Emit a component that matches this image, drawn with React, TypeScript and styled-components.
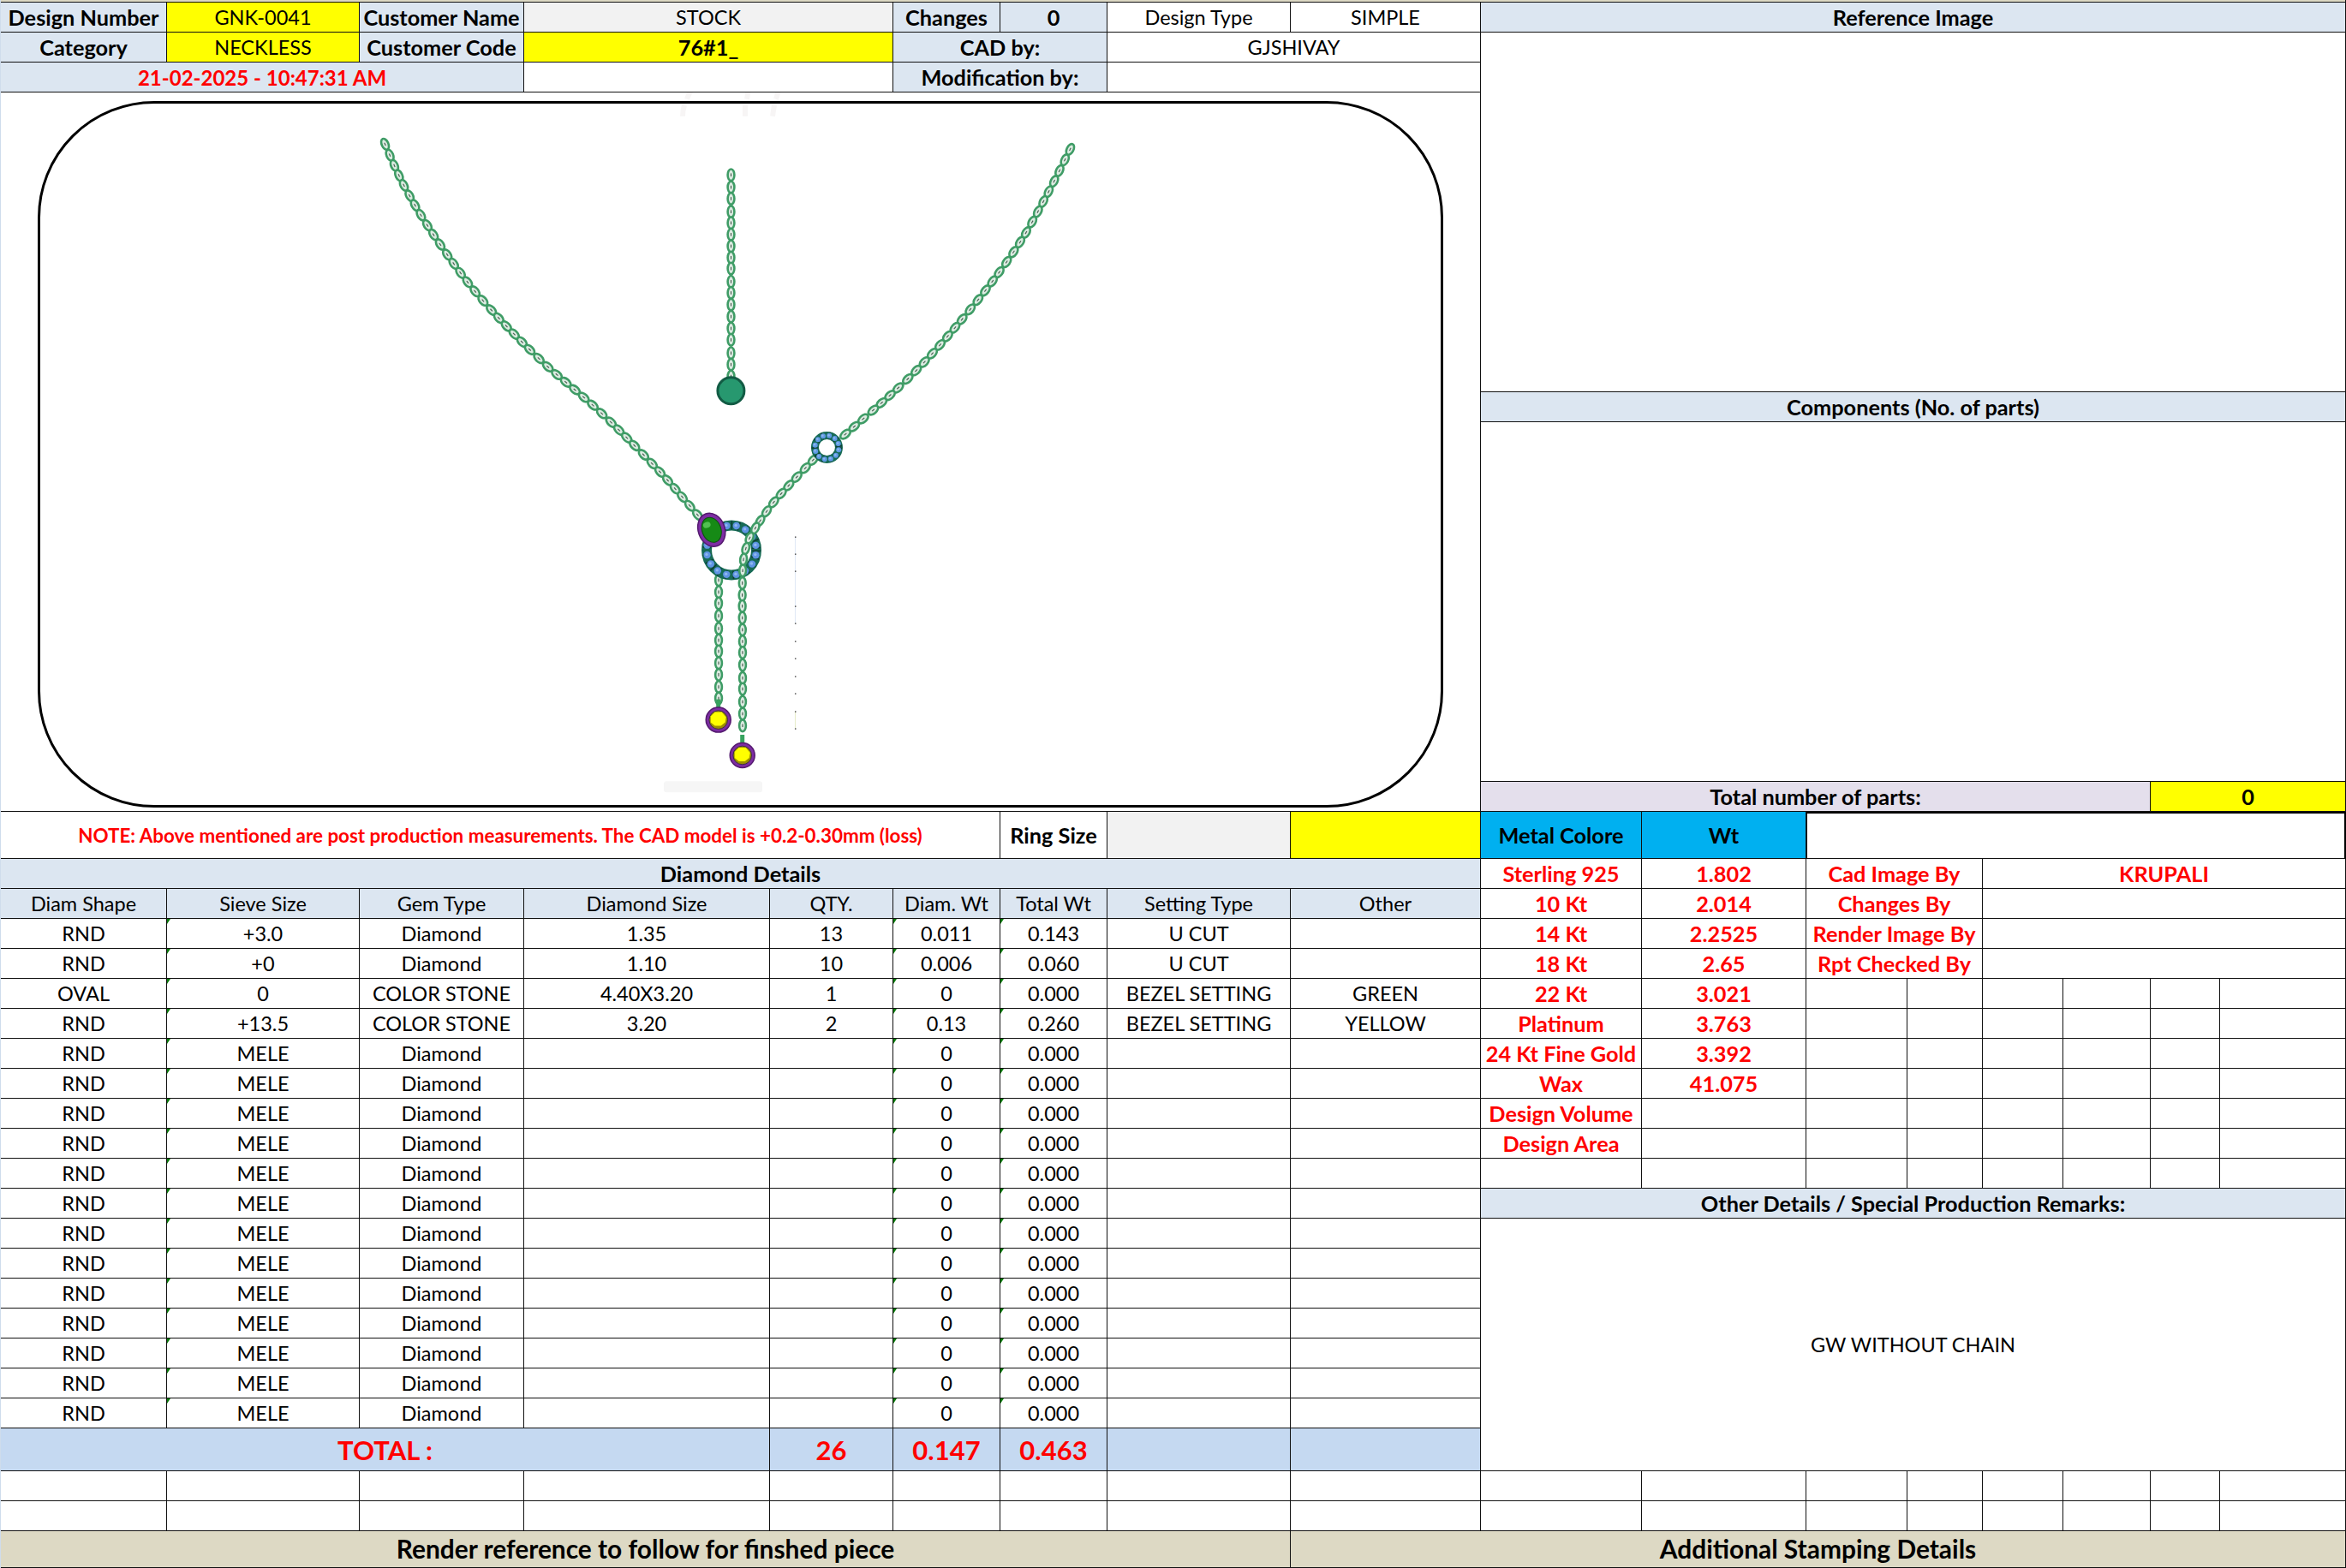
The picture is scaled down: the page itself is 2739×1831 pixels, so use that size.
import styled, { createGlobalStyle } from 'styled-components'

const GlobalStyle = createGlobalStyle`
  html, body {
    margin: 0;
    background: #fff;
    overflow: hidden;
  }
`

const trackWidths = [194, 225, 192, 287, 144, 125, 125, 214, 222, 188, 192, 118, 88, 94, 102, 81, 147]
const trackHeights = [3, 35, 35, 35, 350, 35, 420, 35, 55, 35, 35, ...Array(17).fill(35), 50, 35, 35, 43]

const TONES = {
  white: '#fff',
  head: '#dce6f1',
  yellow: '#ffff00',
  grey: '#f2f2f2',
  total: '#c5d9f1',
  sky: '#00b0f0',
  lilac: '#e4dfec',
  sand: '#ddd9c4',
}

type Tone = keyof typeof TONES

export default function App() {
  return (
    <>
      <GlobalStyle />
      <Sheet>
        <Cell $c="1/18" $r="1/2" $tone="sand" />

        <Cell $c="1/2" $r="2/3" $tone="head" $bold>Design Number</Cell>
        <Cell $c="2/3" $r="2/3" $tone="yellow">GNK-0041</Cell>
        <Cell $c="3/4" $r="2/3" $tone="head" $bold>Customer Name</Cell>
        <Cell $c="4/6" $r="2/3" $tone="grey">STOCK</Cell>
        <Cell $c="6/7" $r="2/3" $tone="head" $bold>Changes</Cell>
        <Cell $c="7/8" $r="2/3" $tone="head" $bold>0</Cell>
        <Cell $c="8/9" $r="2/3">Design Type</Cell>
        <Cell $c="9/10" $r="2/3">SIMPLE</Cell>
        <Cell $c="10/18" $r="2/3" $tone="head" $bold>Reference Image</Cell>

        <Cell $c="1/2" $r="3/4" $tone="head" $bold>Category</Cell>
        <Cell $c="2/3" $r="3/4" $tone="yellow">NECKLESS</Cell>
        <Cell $c="3/4" $r="3/4" $tone="head" $bold>Customer Code</Cell>
        <Cell $c="4/6" $r="3/4" $tone="yellow" $bold>76#1_</Cell>
        <Cell $c="6/8" $r="3/4" $tone="head" $bold>CAD by:</Cell>
        <Cell $c="8/10" $r="3/4">GJSHIVAY</Cell>

        <DateCell $c="1/4" $r="4/5" $tone="head">21-02-2025 - 10:47:31 AM</DateCell>
        <Cell $c="4/6" $r="4/5" />
        <Cell $c="6/8" $r="4/5" $tone="head" $bold>Modification by:</Cell>
        <Cell $c="8/10" $r="4/5" />

        <PictureCell>
          <Frame>
            <NecklaceDrawing />
          </Frame>
        </PictureCell>

        <Cell $c="10/18" $r="3/6" />
        <Cell $c="10/18" $r="6/7" $tone="head" $bold>Components (No. of parts)</Cell>
        <Cell $c="10/18" $r="7/8" />
        <Cell $c="10/16" $r="8/9" $tone="lilac" $bold>Total number of parts:</Cell>
        <Cell $c="16/18" $r="8/9" $tone="yellow" $bold>0</Cell>

        <Cell $c="1/7" $r="9/10"><Note>NOTE: Above mentioned are post production measurements. The CAD model is +0.2-0.30mm (loss)</Note></Cell>
        <Cell $c="7/8" $r="9/10" $bold>Ring Size</Cell>
        <Cell $c="8/9" $r="9/10" $tone="grey" />
        <Cell $c="9/10" $r="9/10" $tone="yellow" />
        <Cell $c="10/11" $r="9/10" $tone="sky" $bold>Metal Colore</Cell>
        <Cell $c="11/12" $r="9/10" $tone="sky" $bold>Wt</Cell>
        <BlankBox />

        <Cell $c="1/10" $r="10/11" $tone="head" $bold>Diamond Details</Cell>
        {diamondColumns.map((col) => (
          <Cell key={col.title} $c={col.span} $r="11/12" $tone="head">{col.title}</Cell>
        ))}
        {diamondRows.map((row, r) =>
          diamondColumns.map((col, c) => (
            <Cell key={col.title} $c={col.span} $r={`${12 + r}/${13 + r}`} $tick={col.tick}>{row[c]}</Cell>
          )),
        )}

        <TotalCell $c="1/5" $r="29/30" $tone="total">TOTAL :</TotalCell>
        <TotalCell $c="5/6" $r="29/30" $tone="total">26</TotalCell>
        <TotalCell $c="6/7" $r="29/30" $tone="total">0.147</TotalCell>
        <TotalCell $c="7/8" $r="29/30" $tone="total">0.463</TotalCell>
        <TotalCell $c="8/9" $r="29/30" $tone="total" />
        <TotalCell $c="9/10" $r="29/30" $tone="total" />

        {metalRows.map((metal, i) => (
          <MetalCell key={metal.name} $c="10/11" $r={`${10 + i}/${11 + i}`}>{metal.name}</MetalCell>
        ))}
        {metalRows.map((metal, i) => (
          <MetalCell key={metal.name} $c="11/12" $r={`${10 + i}/${11 + i}`}>{metal.wt}</MetalCell>
        ))}
        {signoffRows.map((row, i) => (
          <MetalCell key={row} $c="12/14" $r={`${10 + i}/${11 + i}`}>{row}</MetalCell>
        ))}
        <MetalCell $c="14/18" $r="10/11">KRUPALI</MetalCell>
        <Cell $c="14/18" $r="11/12" />
        <Cell $c="14/18" $r="12/13" />
        <Cell $c="14/18" $r="13/14" />

        {emptyRightRows.map((r) =>
          emptyRightCols.map((c) => <Cell key={c} $c={`${c}/${c + 1}`} $r={`${r}/${r + 1}`} />),
        )}

        <Cell $c="10/18" $r="21/22" $tone="head" $bold>Other Details / Special Production Remarks:</Cell>
        <Cell $c="10/18" $r="22/30">GW WITHOUT CHAIN</Cell>

        {[30, 31].map((r) =>
          emptyBottomCols.map((c) => <Cell key={c} $c={`${c}/${c + 1}`} $r={`${r}/${r + 1}`} />),
        )}

        <FooterCell $c="1/9" $r="32/33">Render reference to follow for finshed piece</FooterCell>
        <FooterCell $c="9/18" $r="32/33">Additional Stamping Details</FooterCell>
      </Sheet>
    </>
  )
}

const diamondColumns = [
  { title: 'Diam Shape', span: '1/2', tick: false },
  { title: 'Sieve Size', span: '2/3', tick: true },
  { title: 'Gem Type', span: '3/4', tick: false },
  { title: 'Diamond Size', span: '4/5', tick: false },
  { title: 'QTY.', span: '5/6', tick: false },
  { title: 'Diam. Wt', span: '6/7', tick: true },
  { title: 'Total Wt', span: '7/8', tick: true },
  { title: 'Setting Type', span: '8/9', tick: false },
  { title: 'Other', span: '9/10', tick: false },
]

const meleRow = ['RND', 'MELE', 'Diamond', '', '', '0', '0.000', '', '']

const diamondRows = [
  ['RND', '+3.0', 'Diamond', '1.35', '13', '0.011', '0.143', 'U CUT', ''],
  ['RND', '+0', 'Diamond', '1.10', '10', '0.006', '0.060', 'U CUT', ''],
  ['OVAL', '0', 'COLOR STONE', '4.40X3.20', '1', '0', '0.000', 'BEZEL SETTING', 'GREEN'],
  ['RND', '+13.5', 'COLOR STONE', '3.20', '2', '0.13', '0.260', 'BEZEL SETTING', 'YELLOW'],
  ...Array(13).fill(meleRow),
]

const metalRows = [
  { name: 'Sterling 925', wt: '1.802' },
  { name: '10 Kt', wt: '2.014' },
  { name: '14 Kt', wt: '2.2525' },
  { name: '18 Kt', wt: '2.65' },
  { name: '22 Kt', wt: '3.021' },
  { name: 'Platinum', wt: '3.763' },
  { name: '24 Kt Fine Gold', wt: '3.392' },
  { name: 'Wax', wt: '41.075' },
  { name: 'Design Volume', wt: '' },
  { name: 'Design Area', wt: '' },
  { name: ' ', wt: '' },
]

const signoffRows = ['Cad Image By', 'Changes By', 'Render Image By', 'Rpt Checked By']
const emptyRightRows = [14, 15, 16, 17, 18, 19, 20]
const emptyRightCols = [12, 13, 14, 15, 16, 17]
const emptyBottomCols = [1, 2, 3, 4, 5, 6, 7, 8, 9, 10, 11, 12, 13, 14, 15, 16, 17]

type Point = [number, number]

// walks a catmull-rom curve through the knots and drops a link every `pitch` px
function chainLinks(knots: Point[], pitch = 12.7) {
  const dense: Point[] = []
  for (let i = 0; i < knots.length - 1; i++) {
    const p0 = knots[Math.max(i - 1, 0)]
    const p1 = knots[i]
    const p2 = knots[i + 1]
    const p3 = knots[Math.min(i + 2, knots.length - 1)]
    for (let s = 0; s < 40; s++) {
      const t = s / 40
      const at = (a: number, b: number, c: number, d: number) =>
        0.5 * (2 * b + (c - a) * t + (2 * a - 5 * b + 4 * c - d) * t * t + (3 * b - a - 3 * c + d) * t * t * t)
      dense.push([at(p0[0], p1[0], p2[0], p3[0]), at(p0[1], p1[1], p2[1], p3[1])])
    }
  }
  dense.push(knots[knots.length - 1])

  const links: { x: number; y: number; angle: number }[] = []
  let walked = pitch
  for (let i = 1; i < dense.length; i++) {
    const dx = dense[i][0] - dense[i - 1][0]
    const dy = dense[i][1] - dense[i - 1][1]
    walked += Math.hypot(dx, dy)
    if (walked >= pitch) {
      walked = 0
      links.push({ x: dense[i][0], y: dense[i][1], angle: (Math.atan2(dy, dx) * 180) / Math.PI })
    }
  }
  return links
}

function Chain({ knots }: { knots: Point[] }) {
  return (
    <g>
      {chainLinks(knots).map((link) => (
        <g key={`${link.x}-${link.y}`} transform={`translate(${link.x} ${link.y}) rotate(${link.angle})`}>
          <ellipse rx="6.8" ry="3.9" fill="#dcebe1" stroke="#3f9c66" strokeWidth="2.6" />
          <line x1="-1.8" x2="1.8" stroke="#4d5f55" strokeWidth="1.2" />
        </g>
      ))}
    </g>
  )
}

function BeadRing({ cx, cy, outer, inner, beads, bead, beadColor }: {
  cx: number
  cy: number
  outer: number
  inner: number
  beads: number
  bead: number
  beadColor: string
}) {
  const mid = (outer + inner) / 2
  const width = outer - inner
  return (
    <g>
      <circle cx={cx} cy={cy} r={mid} fill="none" stroke="#176b56" strokeWidth={width} />
      <circle cx={cx} cy={cy} r={mid} fill="none" stroke="#0f3d34" strokeWidth={width * 0.85} strokeDasharray="1.5 7" />
      {Array.from({ length: beads }, (_, i) => {
        const a = (i / beads) * Math.PI * 2 + 0.2
        const x = cx + Math.cos(a) * mid
        const y = cy + Math.sin(a) * mid
        return (
          <g key={i}>
            <circle cx={x} cy={y} r={bead} fill={beadColor} />
            <circle cx={x - 0.6} cy={y - 0.6} r={bead * 0.4} fill="#8fb8ef" />
          </g>
        )
      })}
    </g>
  )
}

function YellowDrop({ cx, cy }: { cx: number; cy: number }) {
  return (
    <g>
      <rect x={cx - 2.5} y={cy - 24} width="5" height="12" fill="#37a35f" />
      <circle cx={cx} cy={cy} r="14.5" fill="#7d2da3" stroke="#54196f" strokeWidth="1.5" />
      <circle cx={cx} cy={cy} r="10.8" fill="#9c8f00" stroke="#3d2a4a" strokeWidth="1" />
      <polygon
        fill="#ffff00"
        points={`${cx - 9},${cy - 4} ${cx - 4},${cy - 9} ${cx + 4},${cy - 9} ${cx + 9},${cy - 3} ${cx + 8},${cy + 3} ${cx + 3},${cy + 7} ${cx - 4},${cy + 7} ${cx - 9},${cy + 3}`}
      />
    </g>
  )
}

// drawn in page coordinates so the numbers read directly off the reference
function NecklaceDrawing() {
  return (
    <Drawing viewBox="46.5 121.5 1636 819">
      <g fill="none" stroke="#f7f5f5" strokeWidth="6">
        <path d="M797 136 C797 130 798 126 799 123" />
        <path d="M802 116 C806 100 825 88 850 92" />
        <path d="M870 136 L870 123" />
        <path d="M872 116 C874 102 876 92 880 84" />
        <path d="M902 136 L904 123" />
        <path d="M906 116 C910 104 912 90 920 80" />
      </g>
      <rect x="775" y="913" width="115" height="13" rx="3" fill="#f6f6f6" />

      <line x1="928.5" x2="928.5" y1="627" y2="728" stroke="#dfe8f6" strokeWidth="1" />
      <line x1="928.5" x2="928.5" y1="831" y2="851" stroke="#e6ecc8" strokeWidth="1" />
      {[627, 647, 667, 708, 728, 749, 769, 790, 810, 831, 851].map((y) => (
        <rect key={y} x="928" y={y} width="1.5" height="1.5" fill="#555" />
      ))}

      <Chain knots={[[449, 168], [472, 218], [507, 276], [559, 346], [629, 419], [699, 480], [769, 550], [818, 606]]} />
      <Chain knots={[[853.5, 203], [853.5, 320], [853.5, 440]]} />
      <Chain knots={[[1250, 174], [1223, 227], [1188, 288], [1136, 358], [1066, 437], [982, 512]]} />
      <Chain knots={[[950, 537], [905, 585], [882, 617]]} />
      <Chain knots={[[839, 677], [839, 750], [839, 818]]} />

      <circle cx="853.4" cy="456.8" r="15.5" fill="#27986f" stroke="#125b44" strokeWidth="3" />
      <BeadRing cx={965.5} cy={523} outer={18.5} inner={9.5} beads={12} bead={3} beadColor="#5f9ae4" />
      <BeadRing cx={854} cy={643} outer={35} inner={23} beads={16} bead={4.2} beadColor="#5f94e4" />
      <Chain knots={[[882, 617], [872, 637], [867, 670], [867, 770], [867, 858]]} />

      <g transform="rotate(-20 830.7 619.3)">
        <ellipse cx="830.7" cy="619.3" rx="15.5" ry="20" fill="#7d2da3" stroke="#54196f" strokeWidth="1.5" />
        <ellipse cx="830.7" cy="619.3" rx="11" ry="15" fill="#168a16" stroke="#0c4f10" strokeWidth="1" />
        <ellipse cx="827.5" cy="612" rx="4.5" ry="3.5" fill="#52c052" />
      </g>

      <YellowDrop cx={838.7} cy={841.3} />
      <YellowDrop cx={866.7} cy={882.7} />
    </Drawing>
  )
}

const Sheet = styled.div`
  display: grid;
  grid-template-columns: ${trackWidths.map((w) => `${w}px`).join(' ')};
  grid-template-rows: ${trackHeights.map((h) => `${h}px`).join(' ')};
  width: 2739px;
  height: 1831px;
  box-sizing: border-box;
  border-left: 1px solid #cfdcec;
  background: #fff;
  color: #000;
  font-family: Lato, "Noto Sans", sans-serif;
  font-size: 23.5px;
`

const Cell = styled.div<{
  $c: string
  $r: string
  $tone?: Tone
  $bold?: boolean
  $tick?: boolean
}>`
  grid-column: ${(p) => p.$c};
  grid-row: ${(p) => p.$r};
  position: relative;
  display: flex;
  align-items: center;
  justify-content: center;
  box-sizing: border-box;
  min-width: 0;
  min-height: 0;
  white-space: nowrap;
  border-right: 1px solid #111;
  border-bottom: 1px solid #111;
  background: ${(p) => TONES[p.$tone ?? 'white']};
  font-size: ${(p) => (p.$bold ? '25.3px' : 'inherit')};
  font-weight: ${(p) => (p.$bold ? 700 : 400)};
  ${(p) =>
    p.$tick &&
    `&::before {
      content: '';
      position: absolute;
      top: 0;
      left: 0;
      border-top: 6px solid #0a7a0a;
      border-right: 4px solid transparent;
    }`}
`

const DateCell = styled(Cell)`
  color: #ff0000;
  font-size: 24px;
  font-weight: 700;
`

const MetalCell = styled(Cell)`
  color: #ff0000;
  font-size: 25.3px;
  font-weight: 700;
`

const TotalCell = styled(Cell)`
  color: #ff0000;
  font-size: 31px;
  font-weight: 700;
`

const FooterCell = styled(Cell)`
  padding-bottom: 3px;
  background: #ddd9c4;
  font-size: 29.9px;
  font-weight: 700;
`

const BlankBox = styled(Cell).attrs({ $c: '12/18', $r: '9/10' })`
  border-top: 2px solid #000;
  border-left: 1px solid #000;
  border-right: 2px solid #000;
`

const Note = styled.span`
  color: #ff0000;
  font-size: 22.4px;
  font-weight: 700;
`

const PictureCell = styled.div`
  grid-column: 1 / 10;
  grid-row: 5 / 9;
  display: flex;
  box-sizing: border-box;
  min-height: 0;
  padding: 10px 43px 4px 43px;
  border-right: 1px solid #111;
  border-bottom: 1px solid #111;
  background: #fff;
`

const Frame = styled.div`
  flex: 1;
  min-width: 0;
  box-sizing: border-box;
  border: 3px solid #000;
  border-radius: 136px;
`

const Drawing = styled.svg`
  display: block;
  width: 100%;
  height: 100%;
  overflow: visible;
`
